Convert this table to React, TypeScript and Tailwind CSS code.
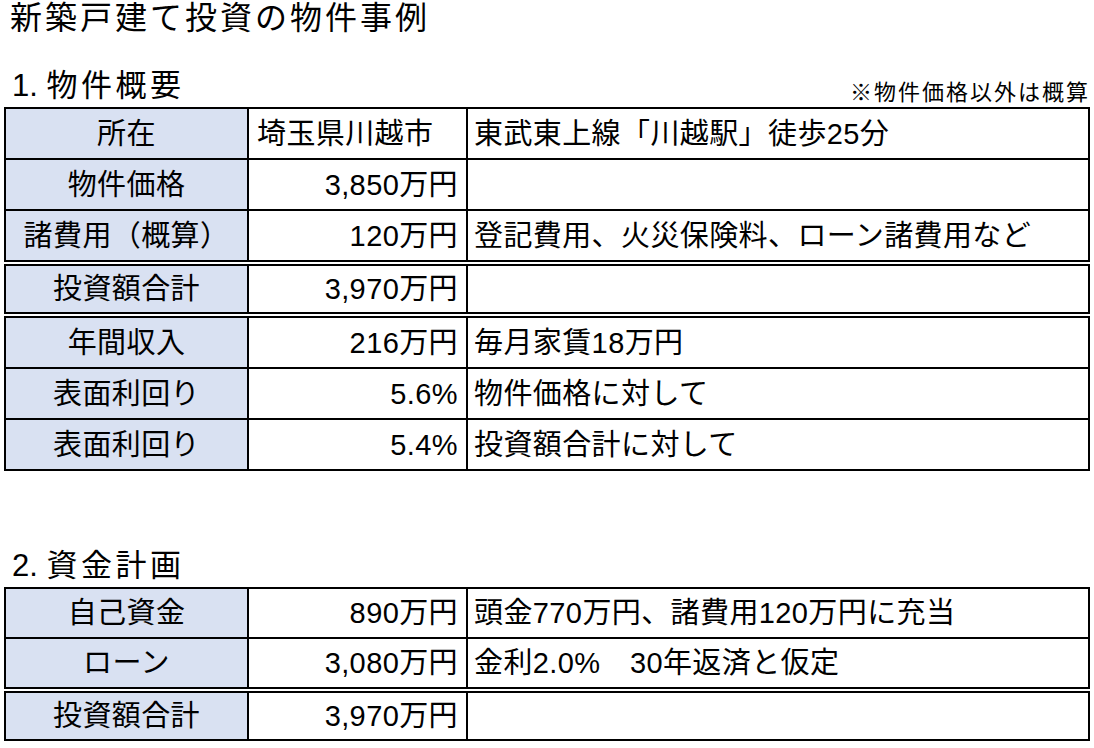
import React from 'react';

type Row = {
  label: string;
  value: string;
  note?: string;
  valueLeft?: boolean;
};

type Group = {
  rows: Row[];
  // first row height, and height of following rows (they carry a 2px top border)
  rowH: string;
  rowHb: string;
};

const FONT = "font-['Liberation_Sans','Noto_Sans_CJK_JP',sans-serif]";

function TableGroup({ group, first }: { group: Group; first?: boolean }) {
  return (
    <div className={`border-2 border-black ${first ? '' : 'mt-[2px]'}`}>
      {group.rows.map((r, i) => (
        <div key={i} className={`flex ${i > 0 ? `${group.rowHb} border-t-2 border-black` : group.rowH}`}>
          <div className="w-[241px] shrink-0 bg-[#D9E1F2] flex items-center justify-center leading-[34px]">
            {r.label}
          </div>
          <div
            className={`w-[219px] shrink-0 border-l-2 border-black flex items-center leading-[34px] ${
              r.valueLeft ? 'justify-start pl-[8px]' : 'justify-end pr-[8px]'
            }`}
          >
            {r.value}
          </div>
          <div className="flex-1 border-l-2 border-black flex items-center pl-[6px] leading-[34px]">
            {r.note}
          </div>
        </div>
      ))}
    </div>
  );
}

function Section({
  num,
  heading,
  note,
  groups,
}: {
  num: string;
  heading: string;
  note?: string;
  groups: Group[];
}) {
  return (
    <div>
      <div className="h-[38px] flex justify-between pl-[12px] pr-[4px]">
        <div className="text-[31px] leading-[34px]">
          <span>{num} </span>
          <span className="tracking-[3.5px]">{heading}</span>
        </div>
        {note && (
          <div className="self-end pb-[1px] text-[22px] leading-[26px] tracking-[2px]">{note}</div>
        )}
      </div>
      <div className="ml-[4px] w-[1086px] text-[29px] tracking-[0.4px]">
        {groups.map((g, i) => (
          <TableGroup key={i} group={g} first={i === 0} />
        ))}
      </div>
    </div>
  );
}

const overview: Group[] = [
  {
    rowH: 'h-[49px]',
    rowHb: 'h-[51px]',
    rows: [
      { label: '所在', value: '埼玉県川越市', note: '東武東上線「川越駅」徒歩25分', valueLeft: true },
      { label: '物件価格', value: '3,850万円' },
      { label: '諸費用（概算）', value: '120万円', note: '登記費用、火災保険料、ローン諸費用など' },
    ],
  },
  {
    rowH: 'h-[46px]',
    rowHb: 'h-[48px]',
    rows: [{ label: '投資額合計', value: '3,970万円' }],
  },
  {
    rowH: 'h-[49px]',
    rowHb: 'h-[51px]',
    rows: [
      { label: '年間収入', value: '216万円', note: '毎月家賃18万円' },
      { label: '表面利回り', value: '5.6%', note: '物件価格に対して' },
      { label: '表面利回り', value: '5.4%', note: '投資額合計に対して' },
    ],
  },
];

const funding: Group[] = [
  {
    rowH: 'h-[48px]',
    rowHb: 'h-[50px]',
    rows: [
      { label: '自己資金', value: '890万円', note: '頭金770万円、諸費用120万円に充当' },
      { label: 'ローン', value: '3,080万円', note: '金利2.0%　30年返済と仮定' },
    ],
  },
  {
    rowH: 'h-[46px]',
    rowHb: 'h-[48px]',
    rows: [{ label: '投資額合計', value: '3,970万円' }],
  },
];

export default function App() {
  return (
    <div className={`w-[1094px] h-[748px] bg-white text-black overflow-hidden ${FONT}`}>
      <div className="h-[69px] pl-[10px] pt-[2px] text-[32px] leading-[32px] tracking-[3px]">
        新築戸建て投資の物件事例
      </div>
      <Section num="1." heading="物件概要" note="※物件価格以外は概算" groups={overview} />
      <div className="mt-[78px]">
        <Section num="2." heading="資金計画" groups={funding} />
      </div>
    </div>
  );
}
